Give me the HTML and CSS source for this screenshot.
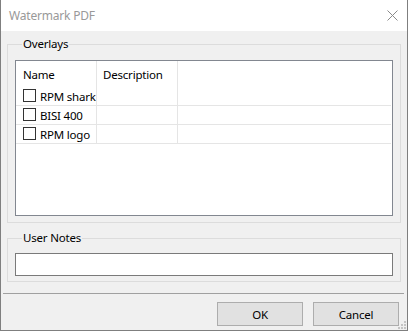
FILE: index.html
```html
<!DOCTYPE html>
<html>
  <head>
    <title>Watermark PDF</title>
    <meta charset='utf-8'>
    <link rel="stylesheet" href="styles.css">
  </head>

  <body>
    <div class="window">
      <div class="titlebar">
        <span class="title">Watermark PDF</span>
        <svg class="close" width="11" height="11" viewBox="0 0 11 11">
          <path d="M0.5 0.5 L10.5 10.5 M10.5 0.5 L0.5 10.5" stroke="#8a8a8a" stroke-width="1" fill="none"/>
        </svg>
      </div>

      <div class="client">
        <!-- overlays group -->
        <fieldset class="group">
          <legend>Overlays</legend>
          <div class="list">
            <div class="row head">
              <div class="cell">Name</div>
              <div class="cell">Description</div>
              <div class="cell last"></div>
            </div>
            <div class="row">
              <div class="cell"><span class="check"></span>RPM shark</div>
              <div class="cell"></div>
              <div class="cell last"></div>
            </div>
            <div class="row">
              <div class="cell"><span class="check"></span>BISI 400</div>
              <div class="cell"></div>
              <div class="cell last"></div>
            </div>
            <div class="row">
              <div class="cell"><span class="check"></span>RPM logo</div>
              <div class="cell"></div>
              <div class="cell last"></div>
            </div>
          </div>
        </fieldset>

        <fieldset class="group notes">
          <legend>User Notes</legend>
          <div class="notes-box"></div>
        </fieldset>

        <div class="separator"></div>

        <div class="buttons">
          <div class="btn">OK</div>
          <div class="btn">Cancel</div>
        </div>

        <svg class="grip" width="8" height="8" viewBox="0 0 8 8">
          <rect x="6" y="0" width="2" height="2" fill="#c4c4c4"/>
          <rect x="3" y="3" width="2" height="2" fill="#c4c4c4"/>
          <rect x="6" y="3" width="2" height="2" fill="#c4c4c4"/>
          <rect x="0" y="6" width="2" height="2" fill="#c4c4c4"/>
          <rect x="3" y="6" width="2" height="2" fill="#c4c4c4"/>
          <rect x="6" y="6" width="2" height="2" fill="#c4c4c4"/>
        </svg>
      </div>
    </div>
  </body>
</html>
```

FILE: styles.css
```css
body {
  margin: 0;
  font-family: "Noto Sans", "Open Sans", sans-serif;
  font-size: 11.5px;
  letter-spacing: -0.2px;
  color: #000;
}

.window {
  width: 408px;
  height: 331px;
  box-sizing: border-box;
  border: 1px solid #7f7f7f;
  border-top: none;
  display: flex;
  flex-direction: column;
  background: #f0f0f0;
}

.titlebar {
  height: 31px;
  background: #fff;
  display: flex;
  align-items: center;
  justify-content: space-between;
  padding: 0 9px 0 8px;
}
.title {
  color: #999;
  font-size: 12px;
  line-height: 16px;
  margin-top: 1px;
}
.close {
  margin-top: 0;
}

.client {
  flex: 1;
  position: relative;
  padding: 5px 6px 0 6px;
  display: flex;
  flex-direction: column;
}

.group {
  margin: 0;
  padding: 8px 7px 6px 7px;
  border: 1px solid #dcdcdc;
  min-width: 0;
}
.group legend {
  padding: 0 1px;
  margin-left: 7px;
  line-height: 16px;
}
.notes {
  margin-top: 7px;
  padding-top: 7px;
  padding-bottom: 5px;
}

.list {
  height: 156px;
  box-sizing: border-box;
  border: 1px solid #828790;
  background: #fff;
}
.row {
  display: grid;
  grid-template-columns: 81px 81px 1fr;
  height: 19px;
  box-sizing: border-box;
  border-bottom: 1px solid #e5e5e5;
  margin-right: 1px;
}
.row.head {
  height: 26px;
  border-bottom: none;
}
.cell {
  border-right: 1px solid #e5e5e5;
  display: flex;
  align-items: center;
  padding-left: 7px;
  white-space: nowrap;
  overflow: hidden;
}
.head .cell {
  padding-left: 6px;
}
.head .cell:first-child {
  padding-left: 7px;
}
.cell.last {
  border-right: none;
}
.check {
  width: 13px;
  height: 13px;
  box-sizing: border-box;
  border: 1px solid #333;
  background: #fff;
  margin-right: 4px;
  margin-top: -1px;
  flex: none;
}

.notes-box {
  height: 23px;
  box-sizing: border-box;
  border: 1px solid #7a7a7a;
  background: #fff;
}

.separator {
  height: 1px;
  background: #a0a0a0;
  margin: 11px -3px 0 -4px;
}

.buttons {
  display: flex;
  justify-content: flex-end;
  gap: 10px;
  margin-top: 8px;
  padding-right: 2px;
}
.btn {
  width: 86px;
  height: 24px;
  box-sizing: border-box;
  border: 1px solid #adadad;
  background: #e1e1e1;
  display: flex;
  align-items: center;
  justify-content: center;
}

.grip {
  position: absolute;
  right: 1px;
  bottom: 1px;
}
```
